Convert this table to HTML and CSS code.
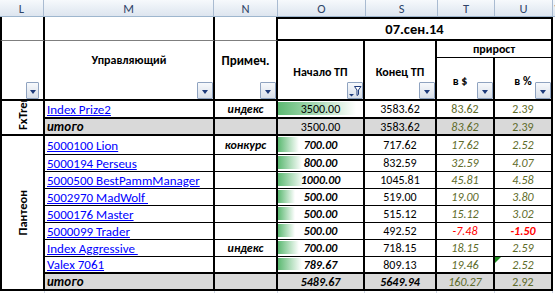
FILE: index.html
```html
<!DOCTYPE html>
<html lang="ru">
<head>
<meta charset="utf-8">
<title>Sheet</title>
<link rel="stylesheet" href="styles.css">
</head>
<body>
<div class="colheads">
  <div class="ch ch-l">L</div>
  <div class="ch ch-m">M</div>
  <div class="ch ch-n">N</div>
  <div class="ch ch-o">O</div>
  <div class="ch ch-s">S</div>
  <div class="ch ch-t">T</div>
  <div class="ch ch-u">U</div>
  <div class="ch ch-v">V</div>
</div>
<div class="sheet">
  <!-- header row 1 -->
  <div class="c bl bbg"></div>
  <div class="c bbg"></div>
  <div class="c bbg"></div>
  <div class="c cs4 bt2 bb2 ctr bold date">07.сен.14</div>

  <!-- header rows 2-3 -->
  <div class="c rs2 bl bb2"><span class="fb fb-l"></span></div>
  <div class="c rs2 bb2 ctr top hd-m bold">Управляющий<span class="fb"></span></div>
  <div class="c rs2 bb2 ctr top hd-m bold big">Примеч.<span class="fb"></span></div>
  <div class="c rs2 bb2 ctr top hd-o bold">Начало ТП<span class="fb fb-f"><svg width="14" height="15" viewBox="0 0 14 15"><path d="M1 11h5l-2.5 2.5z" fill="#1d3a7a"/><path d="M6.5 3.5h6.5l-2.5 3.5v4.5l-1.5 1v-5.5z" fill="#fff" stroke="#1d3a7a" stroke-width="1"/></svg></span></div>
  <div class="c rs2 bb2 ctr top hd-o bold">Конец ТП<span class="fb"></span></div>
  <div class="c cs2 ctr bold">прирост</div>
  <div class="c bb2 ctr top hd-t bold"><span class="pr1">в $</span><span class="fb"></span></div>
  <div class="c bb2 ctr top hd-t bold">в %<span class="fb"></span></div>

  <!-- FxTrend -->
  <div class="c rs2 bl bb2 vcell fx"><span class="vt">FxTrend</span></div>
  <div class="c m bb2"><a href="#">Index Prize2</a></div>
  <div class="c n bb2">индекс</div>
  <div class="c o bb2 bar" style="--w:78px">3500.00</div>
  <div class="c s bb2">3583.62</div>
  <div class="c t bb2">83.62</div>
  <div class="c t bb2">2.39</div>

  <div class="c m tot bb2"><span class="bi">итого</span></div>
  <div class="c n tot bb2"></div>
  <div class="c o tot bb2">3500.00</div>
  <div class="c s tot bb2">3583.62</div>
  <div class="c t tot bb2 it">83.62</div>
  <div class="c t tot bb2">2.39</div>

  <!-- Пантеон -->
  <div class="c rs9 bl bb2 vcell pan"><span class="vt">Пантеон</span></div>

  <div class="c m"><a href="#">5000100 Lion</a></div>
  <div class="c n">конкурс</div>
  <div class="c o bar bi" style="--w:21px">700.00</div>
  <div class="c s">717.62</div>
  <div class="c t it">17.62</div>
  <div class="c t it">2.52</div>

  <div class="c m"><a href="#">5000194 Perseus</a></div>
  <div class="c n"></div>
  <div class="c o bar bi" style="--w:24px">800.00</div>
  <div class="c s">832.59</div>
  <div class="c t it">32.59</div>
  <div class="c t it">4.07</div>

  <div class="c m"><a href="#">5000500 BestPammManager</a></div>
  <div class="c n"></div>
  <div class="c o bar bi" style="--w:26px">1000.00</div>
  <div class="c s">1045.81</div>
  <div class="c t it">45.81</div>
  <div class="c t it">4.58</div>

  <div class="c m"><a href="#">5002970 MadWolf&nbsp;</a></div>
  <div class="c n"></div>
  <div class="c o bar bi" style="--w:17px">500.00</div>
  <div class="c s">519.00</div>
  <div class="c t it">19.00</div>
  <div class="c t it">3.80</div>

  <div class="c m"><a href="#">5000176 Master</a></div>
  <div class="c n"></div>
  <div class="c o bar bi" style="--w:17px">500.00</div>
  <div class="c s">515.12</div>
  <div class="c t it">15.12</div>
  <div class="c t it">3.02</div>

  <div class="c m"><a href="#">5000099 Trader</a></div>
  <div class="c n"></div>
  <div class="c o bar bi" style="--w:17px">500.00</div>
  <div class="c s">492.52</div>
  <div class="c t it neg">-7.48</div>
  <div class="c t it neg bold">-1.50</div>

  <div class="c m"><a href="#">Index Aggressive&nbsp;</a></div>
  <div class="c n">индекс</div>
  <div class="c o bar bi" style="--w:21px">700.00</div>
  <div class="c s">718.15</div>
  <div class="c t it">18.15</div>
  <div class="c t it">2.59</div>

  <div class="c m bb2"><a href="#">Valex 7061</a></div>
  <div class="c n bb2"></div>
  <div class="c o bb2 bar bi" style="--w:24px">789.67</div>
  <div class="c s bb2">809.13</div>
  <div class="c t bb2 it">19.46</div>
  <div class="c t bb2 it"><span class="err"></span>2.52</div>

  <div class="c m tot bb2"><span class="bi">итого</span></div>
  <div class="c n tot bb2"></div>
  <div class="c o tot bb2 bi">5489.67</div>
  <div class="c s tot bb2 bi">5649.94</div>
  <div class="c t tot bb2 it">160.27</div>
  <div class="c t tot bb2">2.92</div>

  <div class="g"></div><div class="g"></div><div class="g"></div><div class="g"></div>
  <div class="g"></div><div class="g"></div><div class="g"></div>
</div>
</body>
</html>
```

FILE: styles.css
```css
* { box-sizing: border-box; margin: 0; padding: 0; }
html, body { width: 555px; height: 293px; overflow: hidden; background: #fff; }
body {
  font-family: "Carlito", "Lato", "Liberation Sans", sans-serif;
  font-size: 12px;
  color: #000;
}

/* column letters */
.colheads {
  display: flex;
  height: 17px;
  background: linear-gradient(#f6f9fc, #dde5ef);
  border-bottom: 1px solid #9eb6ce;
}
.ch {
  display: flex;
  align-items: center;
  justify-content: center;
  border-right: 1px solid #a9bbd1;
  color: #2f4468;
  font-size: 12.5px;
  flex: none;
}
.ch-l { width: 44px; }
.ch-m { width: 170px; }
.ch-n { width: 64px; }
.ch-o { width: 88px; }
.ch-s { width: 72px; }
.ch-t { width: 57px; }
.ch-u { width: 58px; }
.ch-v { width: 10px; border-right: none; }

/* sheet grid */
.sheet {
  display: grid;
  width: 553px;
  grid-template-columns: 45px 170px 63px 87px 72px 58px 58px;
  grid-template-rows: 24px 17px 43px 18px 17px 19px 17px 17px 17px 17px 17px 17px 17px 17px 4px;
}
.c {
  position: relative;
  display: flex;
  align-items: center;
  border-right: 2px solid #000;
  border-bottom: 1px solid #000;
  overflow: hidden;
  white-space: nowrap;
}
.g { border-right: 1px solid #d0d7e5; }
.g:first-child { border-left: 1px solid #d0d7e5; }

.bl { border-left: 2px solid #000; }
.bb2 { border-bottom: 2px solid #000; }
.bt2 { border-top: 2px solid #000; }
.bbg { border-bottom: 1px solid #7f7f7f; }
.rs2 { grid-row: span 2; }
.rs9 { grid-row: span 9; }
.cs2 { grid-column: span 2; }
.cs4 { grid-column: span 4; }
.ctr { justify-content: center; }
.top { align-items: flex-start; }
.bold { font-weight: 700; }
.it { font-style: italic; }
.bi { font-weight: 700; font-style: italic; }
.date { font-size: 14.5px; }
.big { font-size: 13px; }

.hd-m { padding-top: 12px; }
.hd-o { padding-top: 24px; }
.hd-t { padding-top: 16px; }
.pr1 { margin-right: 10px; }

/* autofilter buttons */
.fb {
  position: absolute;
  right: 0;
  bottom: 0;
  width: 16px;
  height: 17px;
  border: 1px solid #8fa3c0;
  border-radius: 1px;
  background: linear-gradient(#f7f9fc, #d8dfe9);
}
.fb::after {
  content: "";
  position: absolute;
  left: 4px;
  top: 7px;
  border-left: 3.5px solid transparent;
  border-right: 3.5px solid transparent;
  border-top: 4px solid #1d3a7a;
}
.fb-l { right: 4px; width: 13px; }
.fb-l::after { left: 2.5px; }
.fb-f::after { display: none; }
.fb-f svg { display: block; }

/* data cells */
.m { padding-left: 2px; font-size: 13px; }
.m a { color: #0000ff; text-decoration: underline; }
.n { justify-content: center; font-weight: 700; font-style: italic; }
.o, .s, .t { justify-content: center; }
.t { color: #5e6b29; }
.neg { color: #ff0000; }
.tot { background-color: #d9d9d9; }
.bar {
  background-image: linear-gradient(90deg, #5cb972, #ffffff);
  background-repeat: no-repeat;
  background-size: var(--w) calc(100% - 3px);
  background-position: 0 1px;
}
.err {
  position: absolute;
  left: 0;
  top: 0;
  border-top: 6px solid #1c8a1c;
  border-right: 6px solid transparent;
}

/* vertical group labels */
.vcell {
  flex-direction: column;
  align-items: center;
  font-weight: 700;
  font-size: 12.5px;
}
.fx { justify-content: flex-end; padding-bottom: 4px; }
.pan { justify-content: center; }
.vt {
  flex: none;
  writing-mode: vertical-rl;
  transform: rotate(180deg);
}
```
